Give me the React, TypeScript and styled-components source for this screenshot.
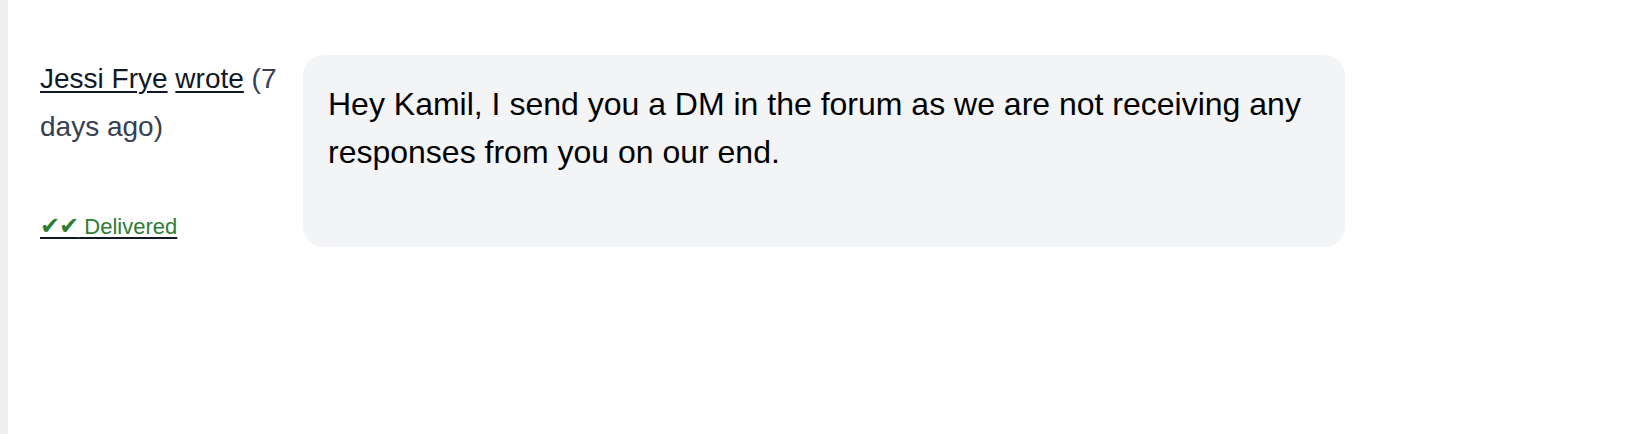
import React from "react";
import styled, { createGlobalStyle } from "styled-components";

const GlobalStyle = createGlobalStyle`
  html, body {
    margin: 0;
    padding: 0;
    background: #ffffff;
  }
  body {
    font-family: "Liberation Sans", Arial, sans-serif;
  }
`;

const StyledPage = styled.div`
  box-sizing: border-box;
  height: 434px;
  border-left: 8px solid #eeeff1;
  background: #ffffff;
`;

const StyledMessageRow = styled.div`
  display: flex;
  flex-direction: row;
  align-items: flex-start;
  gap: 23px;
  padding: 55px 0 0 32px;
`;

const StyledMeta = styled.div`
  display: flex;
  flex-direction: column;
  width: 240px;
  flex-shrink: 0;
`;

const StyledByline = styled.div`
  font-size: 28px;
  line-height: 47.5px;
  color: #374151;
`;

const StyledLink = styled.a`
  color: #111827;
  text-decoration: underline;
  text-decoration-thickness: 2px;
  text-underline-offset: 3px;
`;

const StyledDelivered = styled.a`
  margin-top: 62px;
  font-size: 22px;
  line-height: 28px;
  color: #2e7d32;
  text-decoration: underline;
  text-decoration-color: #111827;
  text-decoration-thickness: 2px;
  text-underline-offset: 3px;
  align-self: flex-start;
`;

const StyledChecks = styled.span`
  font-family: "DejaVu Sans", sans-serif;
  font-size: 24px;
  letter-spacing: -1px;
`;

const StyledBubble = styled.div`
  box-sizing: border-box;
  width: 1042px;
  padding: 26px 25px 71px;
  border-radius: 20px;
  background: #f3f4f6;
  color: #000000;
  font-size: 32px;
  line-height: 47.5px;
`;

function Message({
  author,
  when,
  children,
}: {
  author: string;
  when: string;
  children: React.ReactNode;
}) {
  return (
    <StyledMessageRow>
      <StyledMeta>
        <StyledByline>
          <StyledLink href="#">{author}</StyledLink>{" "}
          <StyledLink href="#">wrote</StyledLink> ({when})
        </StyledByline>
        <StyledDelivered href="#">
          <StyledChecks>✔✔</StyledChecks> Delivered
        </StyledDelivered>
      </StyledMeta>
      <StyledBubble>{children}</StyledBubble>
    </StyledMessageRow>
  );
}

export default function App() {
  return (
    <StyledPage>
      <GlobalStyle />
      <Message author="Jessi Frye" when="7 days ago">
        Hey Kamil, I send you a DM in the forum as we are not receiving any
        responses from you on our end.
      </Message>
    </StyledPage>
  );
}
